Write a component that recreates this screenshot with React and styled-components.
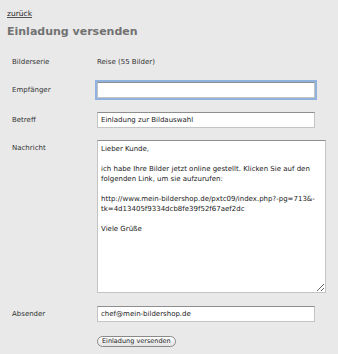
import React from 'react';
import styled, {createGlobalStyle} from 'styled-components';

const GlobalStyle = createGlobalStyle`
  html, body {
    margin: 0;
    padding: 0;
    background: #e9e9e9;
  }
  body {
    font-family: "DejaVu Sans", Verdana, sans-serif;
    color: #333;
  }
`;

const Page = styled.div`
  padding: 1px 7px 0 7px;
  width: 338px;
  box-sizing: border-box;
`;

const BackLink = styled.a`
  display: inline-block;
  font-size: 7.5px;
  line-height: 10px;
  color: #222;
  text-decoration: underline;
  text-decoration-color: #555;
`;

const Title = styled.h1`
  margin: 5px 0 0 0;
  font-size: 11px;
  line-height: 14px;
  font-weight: bold;
  color: #727272;
`;

// label column + field column, like the old table layout
const Form = styled.form`
  margin: 18px 0 0 5px;
  display: flex;
  flex-direction: column;
`;

const Row = styled.div`
  display: grid;
  grid-template-columns: 85px 1fr;
  align-items: start;
  margin-top: ${p => p.$gap || 0}px;
`;

const Label = styled.label`
  font-size: 7px;
  line-height: 10px;
  padding-top: ${p => (p.$plain ? 0 : 3)}px;
  color: #333;
`;

const Value = styled.div`
  font-size: 7px;
  line-height: 10px;
  color: #333;
`;

const TextInput = styled.input`
  box-sizing: border-box;
  width: 218px;
  height: 16px;
  margin: 0;
  padding: 0 3px;
  font-family: "DejaVu Sans", Verdana, sans-serif;
  font-size: 7px;
  color: #222;
  background: #fff;
  border: 1px solid #c4c4c4;
  border-top-color: #8e8e8e;
  outline: none;
  box-shadow: ${p => (p.$focused ? '0 0 0 2px #8fb2de' : 'none')};
`;

const MessageBox = styled.textarea`
  box-sizing: border-box;
  width: 229px;
  height: 153px;
  margin: 0;
  padding: 3px 3px;
  font-family: "DejaVu Sans", Verdana, sans-serif;
  font-size: 7px;
  line-height: 10px;
  color: #222;
  background: #fff;
  border: 1px solid #c4c4c4;
  border-top-color: #8e8e8e;
  resize: both;
  overflow: hidden;
  outline: none;
`;

const SendButton = styled.button`
  justify-self: start;
  height: 11px;
  margin: 0;
  padding: 0 4px;
  font-family: "DejaVu Sans", Verdana, sans-serif;
  font-size: 6.5px;
  line-height: 9px;
  color: #222;
  background: linear-gradient(#fdfdfd, #e4e4e4);
  border: 1px solid #8a8a8a;
  border-radius: 6px;
`;

const message = `Lieber Kunde,

ich habe Ihre Bilder jetzt online gestellt. Klicken Sie auf den folgenden Link, um sie aufzurufen:

http://www.mein-bildershop.de/pxtc09/index.php?-pg=713&-tk=4d13405f9334dcb8fe39f52f67aef2dc

Viele Grüße`;

export default function App() {
  return (
    <>
      <GlobalStyle />
      <Page>
        <BackLink href="#">zurück</BackLink>
        <Title>Einladung versenden</Title>
        <Form onSubmit={e => e.preventDefault()}>
          <Row>
            <Label $plain>Bilderserie</Label>
            <Value>Reise (55 Bilder)</Value>
          </Row>
          <Row $gap={15}>
            <Label>Empfänger</Label>
            <TextInput $focused defaultValue="" />
          </Row>
          <Row $gap={14}>
            <Label>Betreff</Label>
            <TextInput defaultValue="Einladung zur Bildauswahl" />
          </Row>
          <Row $gap={12}>
            <Label>Nachricht</Label>
            <MessageBox defaultValue={message} />
          </Row>
          <Row $gap={13}>
            <Label>Absender</Label>
            <TextInput defaultValue="chef@mein-bildershop.de" />
          </Row>
          <Row $gap={14}>
            <span />
            <SendButton type="submit">Einladung versenden</SendButton>
          </Row>
        </Form>
      </Page>
    </>
  );
}
